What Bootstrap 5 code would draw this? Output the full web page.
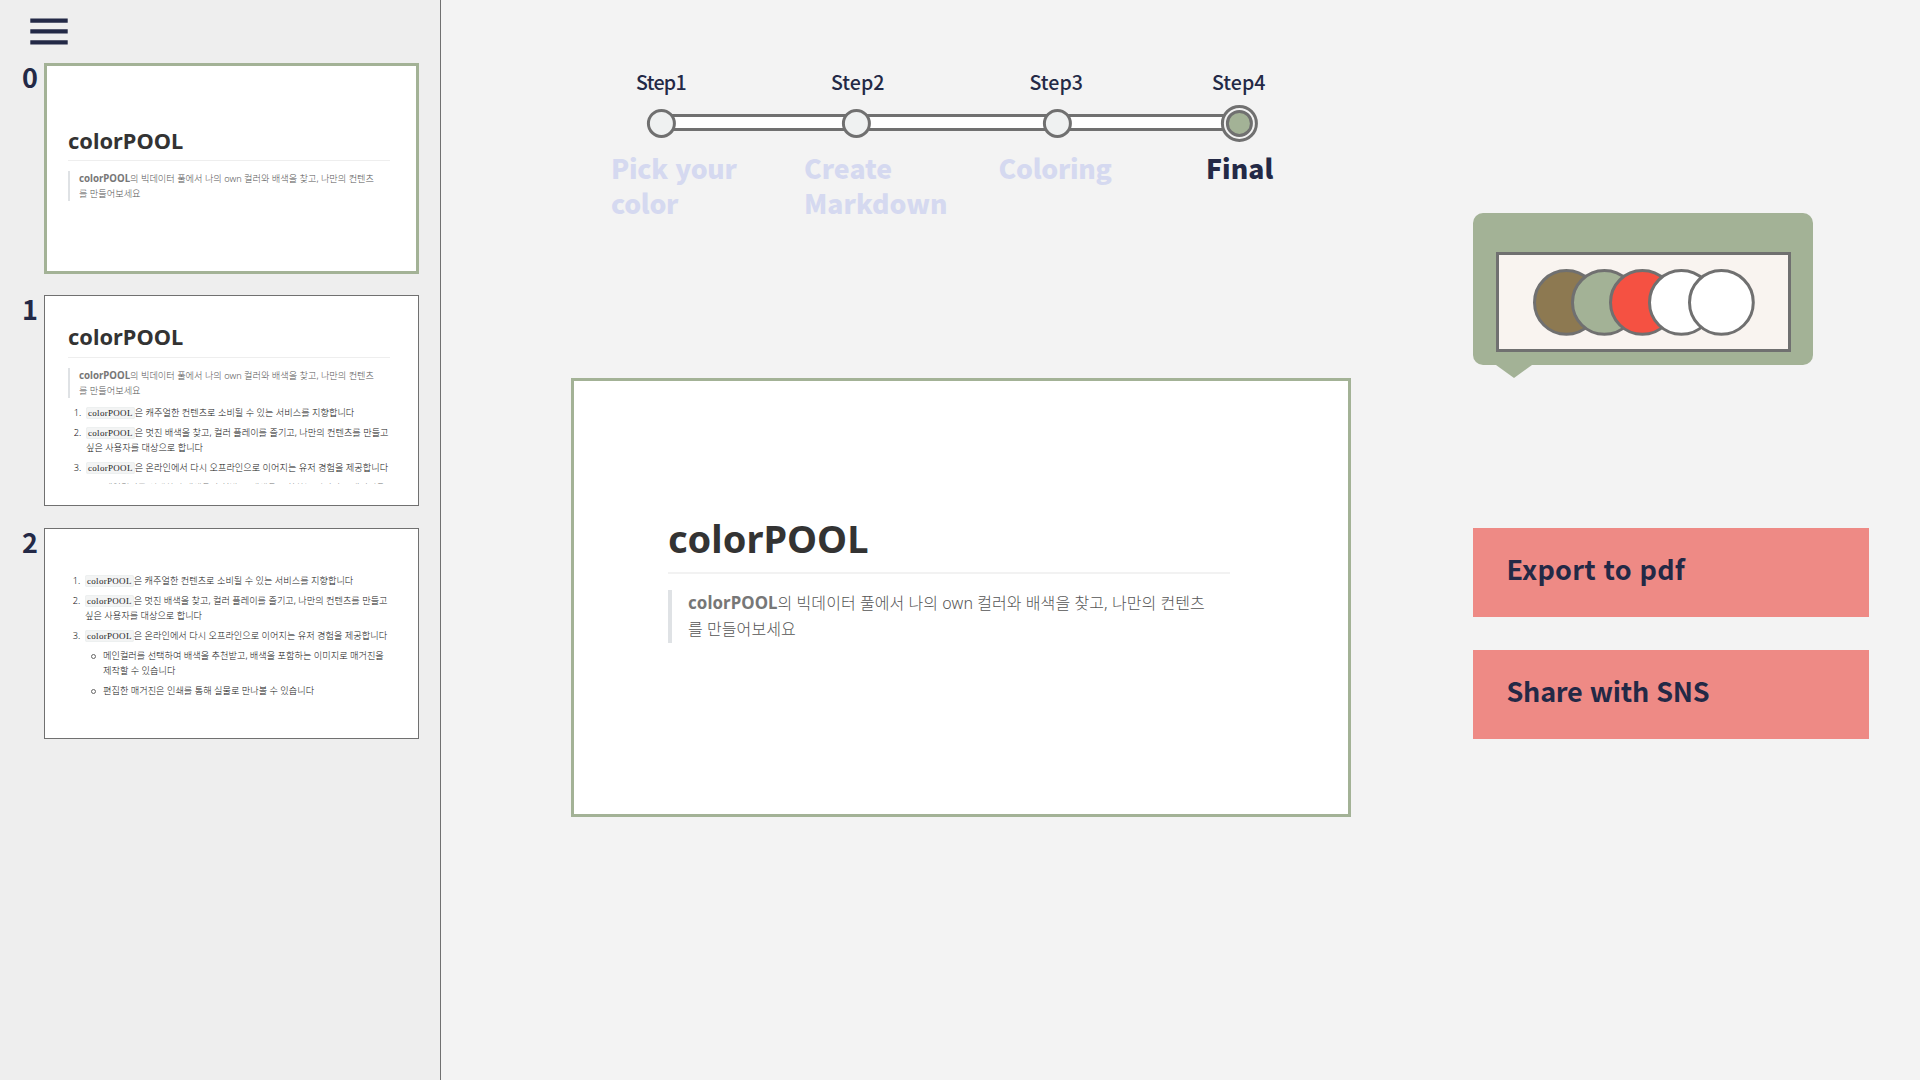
<!DOCTYPE html>
<html lang="ko">
<head>
<meta charset="utf-8">
<meta name="viewport" content="width=device-width, initial-scale=1">
<title>colorPOOL</title>
<link href="https://cdn.jsdelivr.net/npm/bootstrap@5.3.0/dist/css/bootstrap.min.css" rel="stylesheet">
<style>
body{background:#f3f3f3;color:#232946;font-family:"Noto Sans CJK KR",sans-serif;height:1080px;overflow:hidden}
.side-panel{width:441px;background:#eee;border-right:1px solid #707070;padding:16px 0 0 22px}
.menu-btn{width:54px;height:30px;margin-left:-1px}
.thumbs{margin-top:17px}
.thumb-row{height:233px}
.thumb-row:first-child{height:232px}
.thumb-no{width:22px;font-size:27px;font-weight:700;line-height:28px;color:#232946}
.slide{background:#fff;border:1px solid #707070;font-family:"Noto Sans","Noto Sans CJK KR",sans-serif;color:#111;font-size:9.2px;font-weight:300;white-space:nowrap}
.slide.thumb{width:375px;height:211px;padding-left:23px}
.slide.active{border:3px solid #a3b296}
.slide.thumb.active{padding-left:21px}
.slide-body{width:322px}
.slide-body.overflow-hidden{height:188px}
.slide h1{font-size:2.375em;font-weight:700;line-height:1.1;margin:0;border-bottom:1px solid #eee;color:#333}
.slide b{font-weight:700;font-size:1.055em;line-height:0;color:#777}
.slide blockquote{margin:10px 0 0;color:#555;border-left:2.3px solid #dfe2e5;padding-left:9px;line-height:15.15px}
.slide ol,.slide ul{margin:0;padding-left:18px;line-height:15.1px}
.slide ol>li::marker{content:counter(list-item) ".\00a0\00a0"}
.slide ul{list-style:none}
.slide li{margin-top:4.8px}
.slide ul>li{position:relative}
.slide ul>li::before{content:"";position:absolute;left:-12px;top:6px;width:5px;height:5px;border:1px solid #666;border-radius:50%}
.slide code{font-family:"Liberation Serif",serif;font-size:9px;font-weight:400;letter-spacing:.3px;line-height:0;color:#222;background:#f3f4f4;border:1px solid #edf0f0;padding:0 1px;border-radius:2px}
.slide.stage{width:780px;height:439px;font-size:16px;margin:156px 0 0 130px;padding:136px 0 0 94px}
.stage .slide-body{width:562px}
.stage h1{border-bottom:2px solid #f2f2f2;height:57px;line-height:42px}
.stage blockquote{border-left-width:4px;padding-left:16px;line-height:26.4px;margin-top:16px;letter-spacing:.07px}
.work{width:960px;padding-top:70px}
.steps{display:grid;grid-template-columns:193px 194.5px 207.5px 120px;margin-left:170px}
.step-no{font-size:19.6px;line-height:24px;font-weight:500}
.step-no :nth-child(1){padding-left:25px;letter-spacing:-.7px}
.step-no :nth-child(2){padding-left:27px}
.step-no :nth-child(3){padding-left:31px}
.step-no :nth-child(4){padding-left:6px}
.step-name{font-size:26.6px;line-height:35px;font-weight:900;letter-spacing:-.25px;color:#d5d9f0;height:72px}
.step-name .wide{letter-spacing:.05px}
.step-name .now{color:#232946}
.track{display:block;margin:9px 0 7px 200px}
.bubble{width:340px;height:152px;background:#a3b296;border-radius:10px;margin-top:213px;padding:39px 22px 0 23px}
.bubble::after{content:"";position:absolute;left:23px;top:152px;border:18.5px solid transparent;border-top:13px solid #a3b296;border-bottom:0}
.palette-box{height:100px;border:3px solid #707070;background:#f9f4f0}
.action{width:396px;height:89px;background:#ee8a85;color:#232946;border:0;border-radius:0;font-size:27px;font-weight:700;text-align:left;padding:0 0 6px 33.5px;letter-spacing:.22px}
.action+.action{letter-spacing:-.25px}
.actions{margin-top:163px;gap:33px}
</style>
<script src="https://cdn.jsdelivr.net/npm/bootstrap@5.3.0/dist/js/bootstrap.bundle.min.js"></script>
</head>
<body class="d-flex">
<aside class="side-panel flex-shrink-0">
  <svg class="menu-btn d-block" viewBox="0 0 54 30" fill="#232946"><path d="M9.3 2.4h37.4v4.3H9.3zM9.3 13.3h37.4v4.3H9.3zM9.3 24.3h37.4v4.3H9.3z"/></svg>
  <div class="thumbs">
    <div class="thumb-row d-flex">
      <div class="thumb-no">0</div>
      <div class="slide thumb active"><div class="slide-body" style="padding-top:63px">
        <h1 style="height:32px">colorPOOL</h1>
        <blockquote><b>colorPOOL</b>의 빅데이터 풀에서 나의 own 컬러와 배색을 찾고, 나만의 컨텐츠<br>를 만들어보세요</blockquote>
      </div></div>
    </div>
    <div class="thumb-row d-flex">
      <div class="thumb-no">1</div>
      <div class="slide thumb"><div class="slide-body overflow-hidden" style="padding-top:29px">
        <h1 style="height:32.5px">colorPOOL</h1>
        <blockquote>
          <b>colorPOOL</b>의 빅데이터 풀에서 나의 own 컬러와 배색을 찾고, 나만의 컨텐츠<br>를 만들어보세요</blockquote>
        <ol style="margin-top:7px">
          <li><code>colorPOOL</code>은 캐주얼한 컨텐츠로 소비될 수 있는 서비스를 지향합니다</li>
          <li><code>colorPOOL</code>은 멋진 배색을 찾고, 컬러 플레이를 즐기고, 나만의 컨텐츠를 만들고<br>싶은 사용자를 대상으로 합니다</li>
          <li><code>colorPOOL</code>은 온라인에서 다시 오프라인으로 이어지는 유저 경험을 제공합니다
            <ul style="color:#777"><li>메인컬러를 선택하여 배색을 추천받고, 배색을 포함하는 이미지로 매거진을</li></ul></li>
        </ol>
      </div></div>
    </div>
    <div class="thumb-row d-flex">
      <div class="thumb-no">2</div>
      <div class="slide thumb"><div class="slide-body" style="padding-top:39px">
        <ol style="padding-left:17px">
          <li><code>colorPOOL</code>은 캐주얼한 컨텐츠로 소비될 수 있는 서비스를 지향합니다</li>
          <li><code>colorPOOL</code>은 멋진 배색을 찾고, 컬러 플레이를 즐기고, 나만의 컨텐츠를 만들고<br>싶은 사용자를 대상으로 합니다</li>
          <li><code>colorPOOL</code>은 온라인에서 다시 오프라인으로 이어지는 유저 경험을 제공합니다
            <ul><li>메인컬러를 선택하여 배색을 추천받고, 배색을 포함하는 이미지로 매거진을<br>제작할 수 있습니다</li><li>편집한 매거진은 인쇄를 통해 실물로 만나볼 수 있습니다</li></ul></li>
        </ol>
      </div></div>
    </div>
  </div>
</aside>
<main class="work flex-shrink-0">
  <div class="steps step-no">
    <div>Step1</div><div>Step2</div><div>Step3</div><div>Step4</div>
  </div>
  <svg class="track" width="620" height="40" viewBox="641 103 620 40" stroke="#707070" stroke-width="3">
    <path d="M661 115.5H1239M661 129.5H1239" /><path d="M661 117h578v11H661z" fill="#fff" stroke="none"/>
    <g fill="#eff1f1"><circle cx="661.4" cy="123.4" r="13"/><circle cx="856.4" cy="123.4" r="13"/><circle cx="1057.4" cy="123.4" r="13"/></g>
    <circle cx="1239.4" cy="123.4" r="17" fill="#f3f3f3"/><circle cx="1239.4" cy="123.4" r="12" fill="#a3b296"/>
  </svg>
  <div class="steps step-name">
    <div>Pick your<br>color</div><div class="wide">Create<br>Markdown</div><div>Coloring</div><div class="now wide">Final</div>
  </div>
  <section class="slide stage active"><div class="slide-body">
    <h1>colorPOOL</h1>
    <blockquote><b>colorPOOL</b>의 빅데이터 풀에서 나의 own 컬러와 배색을 찾고, 나만의 컨텐츠<br>를 만들어보세요</blockquote>
  </div></section>
</main>
<section style="padding-left:72px">
  <div class="bubble position-relative">
    <div class="palette-box">
      <svg class="d-block" width="289" height="94" viewBox="1499 255 289 94" stroke="#707070" stroke-width="3">
        <circle cx="1566.4" cy="302.4" r="31.9" fill="#8d7951"/><circle cx="1604.4" cy="302.4" r="31.9" fill="#a3b296"/><circle cx="1642.4" cy="302.4" r="31.9" fill="#f55142"/><circle cx="1681.4" cy="302.4" r="31.9" fill="#fff"/><circle cx="1721.4" cy="302.4" r="31.9" fill="#fff"/>
      </svg>
    </div>
  </div>
  <div class="actions d-flex flex-column">
    <button class="btn action">Export to pdf</button>
    <button class="btn action">Share with SNS</button>
  </div>
</section>
</body>
</html>
